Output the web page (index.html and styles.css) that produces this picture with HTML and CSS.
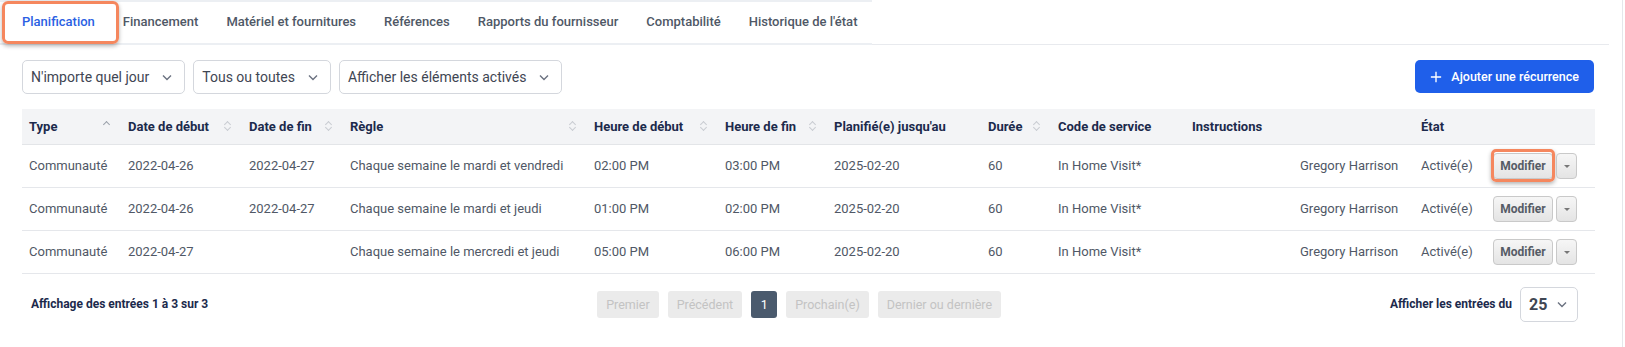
FILE: index.html
```html
<!DOCTYPE html>
<html lang="fr">
<head>
  <meta charset="UTF-8">
  <meta name="viewport" content="width=device-width, initial-scale=1.0">
  <title>Planification</title>
  <link rel="stylesheet" href="styles.css">
</head>
<body>
  <div class="rc-page">
    <!-- Onglets -->
    <div class="rc-tabs-wrap">
      <nav class="rc-tabs">
        <a class="rc-tab rc-tab-active rc-mark">Planification</a>
        <a class="rc-tab">Financement</a>
        <a class="rc-tab">Matériel et fournitures</a>
        <a class="rc-tab">Références</a>
        <a class="rc-tab">Rapports du fournisseur</a>
        <a class="rc-tab">Comptabilité</a>
        <a class="rc-tab">Historique de l'état</a>
      </nav>
    </div>

    <div class="rc-content">
      <!-- Filtres -->
      <div class="rc-toolbar">
        <div class="rc-filters">
          <div class="rc-select">N'importe quel jour
            <svg class="rc-chev" viewBox="0 0 12 12"><path d="M2 4.5l4 4 4-4"/></svg>
          </div>
          <div class="rc-select">Tous ou toutes
            <svg class="rc-chev" viewBox="0 0 12 12"><path d="M2 4.5l4 4 4-4"/></svg>
          </div>
          <div class="rc-select">Afficher les éléments activés
            <svg class="rc-chev" viewBox="0 0 12 12"><path d="M2 4.5l4 4 4-4"/></svg>
          </div>
        </div>
        <button class="rc-btn-add">
          <svg class="rc-plus" viewBox="0 0 14 14"><path d="M7 1v12M1 7h12"/></svg>
          Ajouter une récurrence
        </button>
      </div>

      <!-- Tableau -->
      <table class="rc-table">
        <colgroup>
          <col style="width:99px"><col style="width:121px"><col style="width:101px"><col style="width:244px">
          <col style="width:131px"><col style="width:109px"><col style="width:154px"><col style="width:70px">
          <col style="width:134px"><col style="width:108px"><col style="width:121px"><col style="width:72px">
          <col style="width:109px">
        </colgroup>
        <thead>
          <tr>
            <th><div class="rc-th">Type <span class="rc-sort rc-sort-up"></span></div></th>
            <th><div class="rc-th">Date de début <span class="rc-sort"></span></div></th>
            <th><div class="rc-th">Date de fin <span class="rc-sort"></span></div></th>
            <th><div class="rc-th">Règle <span class="rc-sort"></span></div></th>
            <th><div class="rc-th">Heure de début <span class="rc-sort"></span></div></th>
            <th><div class="rc-th">Heure de fin <span class="rc-sort"></span></div></th>
            <th><div class="rc-th">Planifié(e) jusqu'au</div></th>
            <th><div class="rc-th">Durée <span class="rc-sort"></span></div></th>
            <th><div class="rc-th">Code de service</div></th>
            <th><div class="rc-th">Instructions</div></th>
            <th></th>
            <th><div class="rc-th">État</div></th>
            <th></th>
          </tr>
        </thead>
        <tbody>
          <tr>
            <td>Communauté</td><td>2022-04-26</td><td>2022-04-27</td>
            <td>Chaque semaine le mardi et vendredi</td>
            <td>02:00 PM</td><td>03:00 PM</td><td>2025-02-20</td><td>60</td>
            <td>In Home Visit*</td><td></td><td>Gregory Harrison</td><td>Activé(e)</td>
            <td><div class="rc-actions"><button class="rc-btn-edit rc-mark">Modifier</button><button class="rc-btn-caret"></button></div></td>
          </tr>
          <tr>
            <td>Communauté</td><td>2022-04-26</td><td>2022-04-27</td>
            <td>Chaque semaine le mardi et jeudi</td>
            <td>01:00 PM</td><td>02:00 PM</td><td>2025-02-20</td><td>60</td>
            <td>In Home Visit*</td><td></td><td>Gregory Harrison</td><td>Activé(e)</td>
            <td><div class="rc-actions"><button class="rc-btn-edit">Modifier</button><button class="rc-btn-caret"></button></div></td>
          </tr>
          <tr>
            <td>Communauté</td><td>2022-04-27</td><td></td>
            <td>Chaque semaine le mercredi et jeudi</td>
            <td>05:00 PM</td><td>06:00 PM</td><td>2025-02-20</td><td>60</td>
            <td>In Home Visit*</td><td></td><td>Gregory Harrison</td><td>Activé(e)</td>
            <td><div class="rc-actions"><button class="rc-btn-edit">Modifier</button><button class="rc-btn-caret"></button></div></td>
          </tr>
        </tbody>
      </table>

      <!-- Pied du tableau -->
      <div class="rc-footer">
        <div class="rc-info">Affichage des entrées 1 à 3 sur 3</div>
        <div class="rc-pager">
          <span class="rc-page-btn">Premier</span>
          <span class="rc-page-btn">Précédent</span>
          <span class="rc-page-btn rc-page-current">1</span>
          <span class="rc-page-btn">Prochain(e)</span>
          <span class="rc-page-btn">Dernier ou dernière</span>
        </div>
        <div class="rc-length">
          Afficher les entrées du
          <div class="rc-length-select">25
            <svg class="rc-chev" viewBox="0 0 12 12"><path d="M2 4.5l4 4 4-4"/></svg>
          </div>
        </div>
      </div>
    </div>
  </div>
</body>
</html>
```
FILE: styles.css
```css
* { box-sizing: border-box; }
body { margin: 0; font-family: Roboto, "Noto Sans", sans-serif; color: #4b5563; background: white; }
.rc-page { width: 1623px; min-height: 100vh; border-right: 1px solid #e5e7eb; }

/* Onglets */
.rc-tabs-wrap { width: 1609px; border-bottom: 1px solid #e8eaee; }
.rc-tabs { display: inline-flex; padding: 0 1px 0 8px; border-top: 2px solid #eceff3; border-bottom: 2px solid #eceff3; margin-bottom: -1px; }
.rc-tab { position: relative; display: block; height: 41px; line-height: 40px; padding: 0 14px; font-size: 13px; font-weight: 500; color: #4f5866; cursor: pointer; }
.rc-tab-active { color: #2b5fe3; }
.rc-tab.rc-mark::after { content: ""; position: absolute; top: -1px; bottom: -1px; left: -6px; right: -10px; border: 3px solid #f5875e; border-radius: 6px; box-shadow: 0 2px 4px rgba(0,0,0,0.3); }

.rc-content { padding: 15px 28px 0 22px; }

/* Barre d'outils */
.rc-toolbar { display: flex; justify-content: space-between; align-items: flex-start; }
.rc-filters { display: flex; gap: 8px; }
.rc-select { display: flex; align-items: center; gap: 12px; height: 34px; padding: 0 11px 0 8px; border: 1px solid #d4d7dd; border-radius: 5px; font-size: 14px; color: #3f4653; white-space: nowrap; }
.rc-chev { width: 12px; height: 12px; fill: none; stroke: #6b7280; stroke-width: 1.4; }
.rc-btn-add { display: flex; align-items: center; gap: 9px; height: 33px; padding: 0 15px 0 15px; border: none; border-radius: 5px; background-color: #1f5fea; color: white; font-family: inherit; font-size: 12.5px; font-weight: 500; white-space: nowrap; cursor: pointer; }
.rc-plus { width: 12px; height: 12px; stroke: white; stroke-width: 1.6; }

/* Tableau */
.rc-table { width: 1573px; margin-top: 15px; table-layout: fixed; border-collapse: collapse; font-size: 13px; }
.rc-table th { height: 35px; padding: 0 8px 0 7px; background-color: #f3f4f6; border-bottom: 1px solid #e3e5e8; text-align: left; font-weight: 700; color: #1c2a4c; }
.rc-table td { height: 43px; padding: 0 8px 0 7px; border-bottom: 1px solid #e5e7eb; color: #505866; white-space: nowrap; }
.rc-th { display: flex; justify-content: space-between; align-items: center; }
.rc-sort { position: relative; width: 6px; height: 10px; margin-right: 3px; }
.rc-sort::before, .rc-sort::after { content: ""; position: absolute; left: 0; width: 4px; height: 4px; border-left: 1px solid #c9ccd2; border-top: 1px solid #c9ccd2; }
.rc-sort::before { top: 1px; transform: rotate(45deg); }
.rc-sort::after { bottom: 1px; transform: rotate(225deg); }
.rc-sort-up::before { border-color: #9aa0aa; }
.rc-sort-up::after { display: none; }

.rc-actions { display: flex; gap: 3px; }
.rc-btn-edit, .rc-btn-caret { position: relative; height: 26px; border: 1px solid #c9c9c9; border-radius: 4px; background: linear-gradient(#f6f6f6, #e4e4e4); font-family: inherit; font-size: 12px; font-weight: 700; color: #565c66; cursor: pointer; }
.rc-btn-edit { width: 60px; padding: 0; }
.rc-btn-caret { width: 21px; }
.rc-btn-caret::after { content: ""; position: absolute; left: 7px; top: 11px; border-left: 3px solid transparent; border-right: 3px solid transparent; border-top: 3px solid #777; }
.rc-btn-edit.rc-mark::after { content: ""; position: absolute; top: -5px; bottom: -4px; left: -3px; right: -3px; border: 3px solid #f5875e; border-radius: 5px; box-shadow: 0 2px 4px rgba(0,0,0,0.3); }

/* Pied */
.rc-footer { display: flex; justify-content: space-between; align-items: center; margin-top: 13px; padding: 0 16px 0 9px; }
.rc-info, .rc-length { font-size: 12px; font-weight: 700; color: #1c2a4c; }
.rc-pager { display: flex; gap: 9px; }
.rc-page-btn { height: 27px; line-height: 27px; padding: 0 9px; border-radius: 3px; background-color: #ebebeb; color: #c3c3c3; font-size: 12.5px; }
.rc-page-current { width: 26px; padding: 0; text-align: center; background-color: #4a5a6d; color: white; }
.rc-length { display: flex; align-items: center; gap: 8px; }
.rc-length-select { display: flex; align-items: center; justify-content: space-between; width: 58px; height: 35px; padding: 0 9px 0 8px; border: 1px solid #d4d7dd; border-radius: 5px; font-size: 16px; font-weight: 700; color: #3f4653; }
```
